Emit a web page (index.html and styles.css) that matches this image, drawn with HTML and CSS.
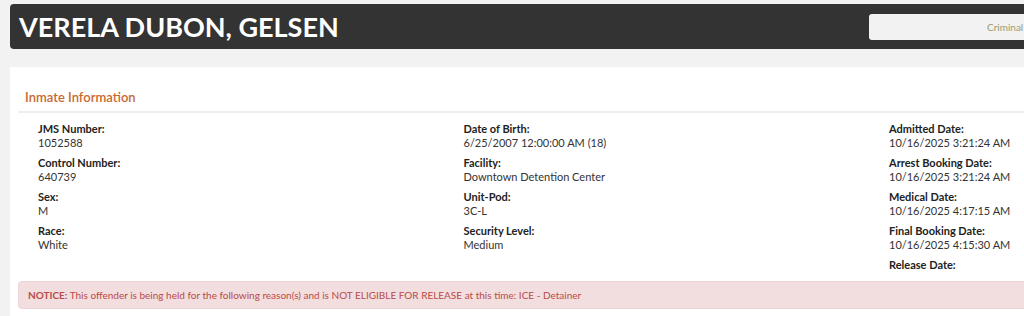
FILE: index.html
```html
<!DOCTYPE html>
<html lang="en">
<head>
  <meta charset="UTF-8" />
  <title>Inmate Information</title>
  <link rel="stylesheet" href="styles.css">
</head>
<body>
  <div class="page">
    <div class="topbar">
      <h1>VERELA DUBON, GELSEN</h1>
      <div class="search">Criminal</div>
    </div>

    <div class="panel">
      <h2 class="panel-title">Inmate Information</h2>

      <div class="info-grid">
        <div class="info-col">
          <div class="field"><div class="field-label">JMS Number:</div><div class="field-value">1052588</div></div>
          <div class="field"><div class="field-label">Control Number:</div><div class="field-value">640739</div></div>
          <div class="field"><div class="field-label">Sex:</div><div class="field-value">M</div></div>
          <div class="field"><div class="field-label">Race:</div><div class="field-value">White</div></div>
        </div>
        <div class="info-col">
          <div class="field"><div class="field-label">Date of Birth:</div><div class="field-value">6/25/2007 12:00:00 AM (18)</div></div>
          <div class="field"><div class="field-label">Facility:</div><div class="field-value">Downtown Detention Center</div></div>
          <div class="field"><div class="field-label">Unit-Pod:</div><div class="field-value">3C-L</div></div>
          <div class="field"><div class="field-label">Security Level:</div><div class="field-value">Medium</div></div>
        </div>
        <div class="info-col">
          <div class="field"><div class="field-label">Admitted Date:</div><div class="field-value">10/16/2025 3:21:24 AM</div></div>
          <div class="field"><div class="field-label">Arrest Booking Date:</div><div class="field-value">10/16/2025 3:21:24 AM</div></div>
          <div class="field"><div class="field-label">Medical Date:</div><div class="field-value">10/16/2025 4:17:15 AM</div></div>
          <div class="field"><div class="field-label">Final Booking Date:</div><div class="field-value">10/16/2025 4:15:30 AM</div></div>
          <div class="field"><div class="field-label">Release Date:</div><div class="field-value"></div></div>
        </div>
      </div>

      <div class="notice">
        <strong>NOTICE:</strong> This offender is being held for the following reason(s) and is NOT ELIGIBLE FOR RELEASE at this time: ICE - Detainer
      </div>
    </div>
  </div>
</body>
</html>
```

FILE: styles.css
```css
body {
  margin: 0;
  padding: 4px 0 0 10px;
  background: #f2f2f2;
  font-family: Lato, "Open Sans", sans-serif;
  font-size: 11px;
  color: #333;
  overflow: hidden;
}

.page {
  width: 1300px;
}

/* Barra superior con el nombre */
.topbar {
  height: 45px;
  background: #333;
  border-radius: 4px;
  display: flex;
  align-items: center;
  justify-content: space-between;
  padding: 0 9px;
}

.topbar h1 {
  margin: 0;
  font-size: 27px;
  font-weight: bold;
  color: #fff;
}

.search {
  width: 432px;
  height: 26px;
  box-sizing: border-box;
  background: #f2f2f2;
  border-radius: 3px;
  padding-left: 118px;
  line-height: 26px;
  color: #9c9a6c;
  font-size: 10px;
}

.panel {
  margin-top: 18px;
  background: #fff;
  padding: 20px 0 8px;
}

.panel-title {
  margin: 0 8px;
  padding: 0 7px 4px;
  font-size: 13px;
  line-height: 20px;
  font-weight: 600;
  color: #c8692f;
  border-bottom: 2px solid #eee;
}

.info-grid {
  display: grid;
  grid-template-columns: repeat(3, 425.5px);
  padding: 9px 0 3px 28px;
}

.field {
  margin-bottom: 6px;
  line-height: 14px;
}

.field-label {
  font-weight: bold;
  color: #222;
}

.field-value {
  color: #333;
}

.notice {
  margin: 0 8px;
  padding: 6px 9px;
  line-height: 14px;
  font-size: 10px;
  background: #f2dede;
  border: 1px solid #ebd5d7;
  border-radius: 4px;
  color: #b94a48;
}

.notice strong {
  font-weight: bold;
}
```
